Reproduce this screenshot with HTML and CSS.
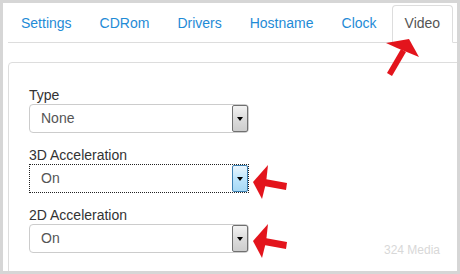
FILE: index.html
```html
<!DOCTYPE html>
<html lang="en">
<head>
    <meta charset="UTF-8">
    <title>Video settings</title>
    <link rel="stylesheet" href="styles.css">
</head>
<body>
    <div class="frame">
        <ul class="tabs">
            <li class="tab"><a>Settings</a></li>
            <li class="tab"><a>CDRom</a></li>
            <li class="tab"><a>Drivers</a></li>
            <li class="tab"><a>Hostname</a></li>
            <li class="tab"><a>Clock</a></li>
            <li class="tab active"><a>Video</a></li>
        </ul>

        <div class="panel">
            <div class="field">
                <label>Type</label>
                <div class="select">
                    <span class="value">None</span>
                    <span class="select-btn"></span>
                </div>
            </div>
            <div class="field">
                <label>3D Acceleration</label>
                <div class="select focused">
                    <span class="value">On</span>
                    <span class="select-btn"></span>
                </div>
            </div>
            <div class="field">
                <label>2D Acceleration</label>
                <div class="select">
                    <span class="value">On</span>
                    <span class="select-btn"></span>
                </div>
            </div>
            <span class="watermark">324 Media</span>
        </div>

        <!-- red annotation arrows drawn over the screenshot -->
        <svg class="marks" width="460" height="274" viewBox="0 0 460 274">
            <g fill="#e3141c">
                <path d="M387 73 L401 49 L406 52 L392 76 Z"/>
                <path d="M409 39 L386 43 L397 48 L419 57 Z"/>
                <path d="M265 179 L287 183 L286 190 L264 186 Z"/>
                <path d="M253 182 L268 165 L266 183 L262 199 Z"/>
                <path d="M265 238 L287 242 L286 249 L264 245 Z"/>
                <path d="M253 241 L268 224 L266 242 L262 258 Z"/>
            </g>
        </svg>
    </div>
</body>
</html>
```

FILE: styles.css
```css
* {
    box-sizing: border-box;
    margin: 0;
    padding: 0;
}

body {
    font-family: 'Liberation Sans', Arial, sans-serif;
    font-size: 14px;
    background: #fff;
}

.frame {
    position: relative;
    width: 460px;
    height: 274px;
    border: 3px solid #d6d6d6;
    padding: 2px 0 0 5px;
    overflow: hidden;
    background: #fff;
}

.tabs {
    display: flex;
    list-style: none;
    border-bottom: 1px solid #ddd;
}

.tab {
    margin-right: 2px;
    margin-bottom: -1px;
}

.tab a {
    display: block;
    padding: 7px 12px 9px;
    line-height: 20px;
    border: 1px solid transparent;
    border-radius: 4px 4px 0 0;
    color: #1f8bd6;
}

.tab.active a {
    color: #555;
    background: #fff;
    border-color: #ddd #ddd transparent;
}

.panel {
    position: relative;
    margin-top: 19px;
    margin-right: -4px;
    padding: 23px 20px 40px;
    border: 1px solid #ddd;
    border-radius: 4px;
}

.field {
    margin-bottom: 13px;
}

.field label {
    display: block;
    line-height: 18px;
    color: #333;
}

.select {
    display: flex;
    width: 220px;
    height: 29px;
    border: 1px solid #ccc;
    border-radius: 4px;
    background: #fff;
}

.select .value {
    flex: 1;
    padding-left: 11px;
    line-height: 27px;
    color: #555;
}

.select-btn {
    position: relative;
    width: 16px;
    border: 1px solid #707070;
    border-radius: 2px;
    background: linear-gradient(#f3f3f3, #dcdcdc 50%, #cdcdcd);
}

.select-btn::after {
    content: "";
    position: absolute;
    left: 4px;
    top: 11px;
    border-left: 3px solid transparent;
    border-right: 3px solid transparent;
    border-top: 4px solid #000;
}

.select.focused {
    border: 1px dotted #222;
    border-radius: 0;
}

.select.focused .select-btn {
    border-color: #3c7fb1;
    background: linear-gradient(#eaf6fd, #bee6fd 50%, #a7d9f5);
}

.watermark {
    position: absolute;
    left: 375px;
    top: 180px;
    font-size: 12px;
    color: #d8d8d8;
}

.marks {
    position: absolute;
    left: -3px;
    top: -3px;
    pointer-events: none;
}
```
